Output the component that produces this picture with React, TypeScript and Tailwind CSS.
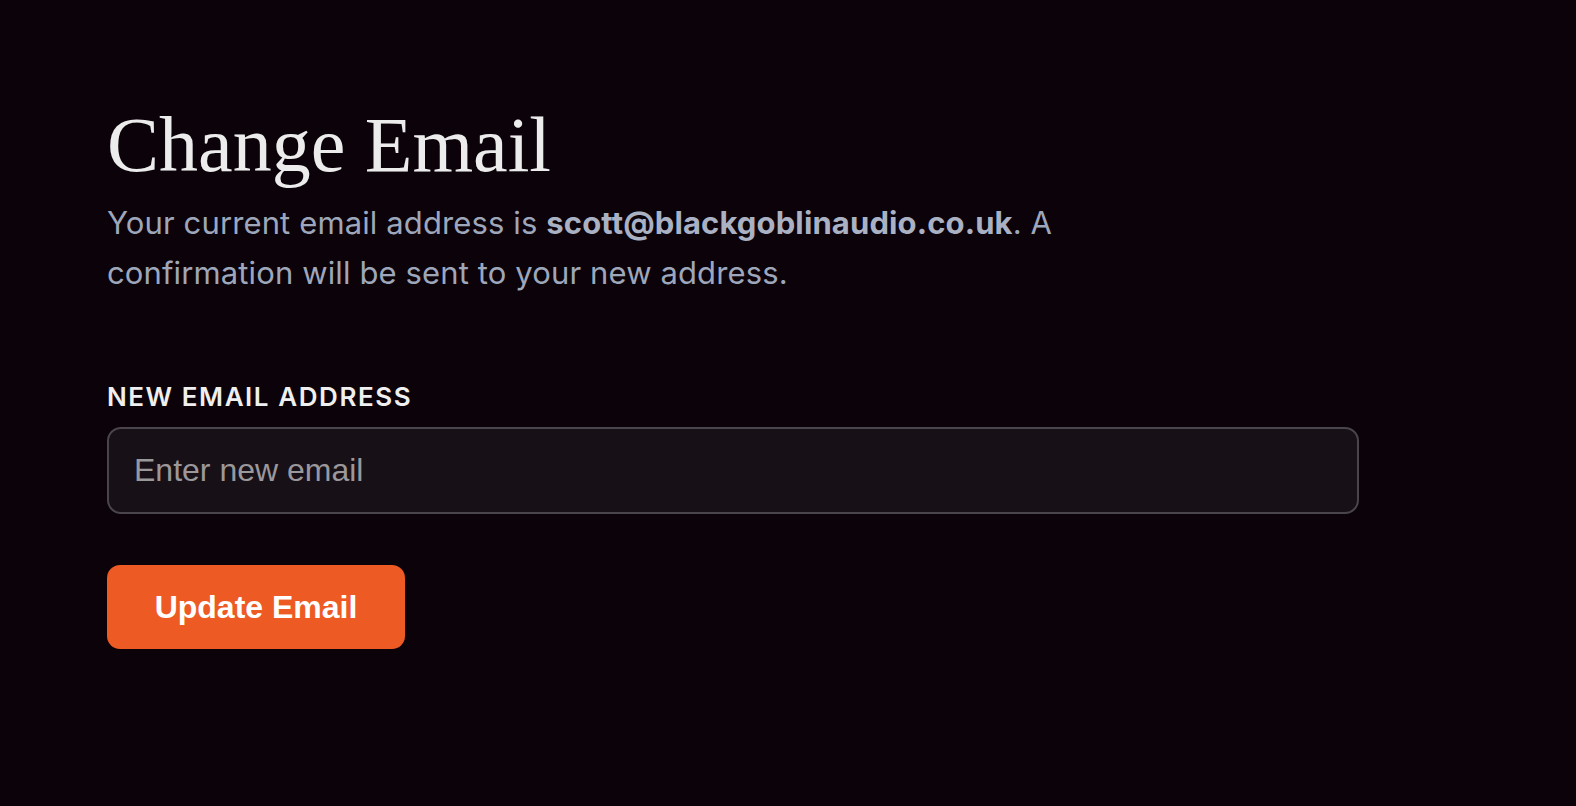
import type { FC } from 'react';

const App: FC = () => {
  return (
    <div className="min-h-[806px] w-full bg-[#0b020a]">
      <div className="pl-[107px] pt-[106px] w-[1359px]">
        {/* Heading */}
        <h1 className="font-['Liberation_Serif',serif] text-[78px] leading-[78px] font-normal text-[#ececec]">
          Change Email
        </h1>
        <p className="mt-[14px] max-w-[1000px] font-['Inter',sans-serif] text-[31px] leading-[50px] tracking-[0.004em] text-[#9ea7ba]">
          Your current email address is{' '}
          <span className="font-bold text-[#a9b1c3]">scott@blackgoblinaudio.co.uk</span>. A
          confirmation will be sent to your new address.
        </p>

        {/* Form */}
        <form className="mt-[83px] flex flex-col" onSubmit={(e) => e.preventDefault()}>
          <label
            htmlFor="new-email"
            className="font-['Inter',sans-serif] text-[26px] leading-[32px] font-semibold uppercase tracking-[0.06em] text-[#efefef]"
          >
            New Email Address
          </label>
          <input
            id="new-email"
            type="email"
            placeholder="Enter new email"
            className="mt-[14px] h-[87px] w-full rounded-[14px] border-2 border-[#4a444c] bg-[#181017] px-[25px] font-['Liberation_Sans',sans-serif] text-[32px] text-white placeholder:text-[#9b989c] outline-none"
          />
          <div className="mt-[51px]">
            <button
              type="submit"
              className="h-[84px] w-[298px] rounded-[13px] bg-[#ee5a23] font-['Liberation_Sans',sans-serif] text-[32px] font-bold text-white"
            >
              Update Email
            </button>
          </div>
        </form>
      </div>
    </div>
  );
};

export default App;
